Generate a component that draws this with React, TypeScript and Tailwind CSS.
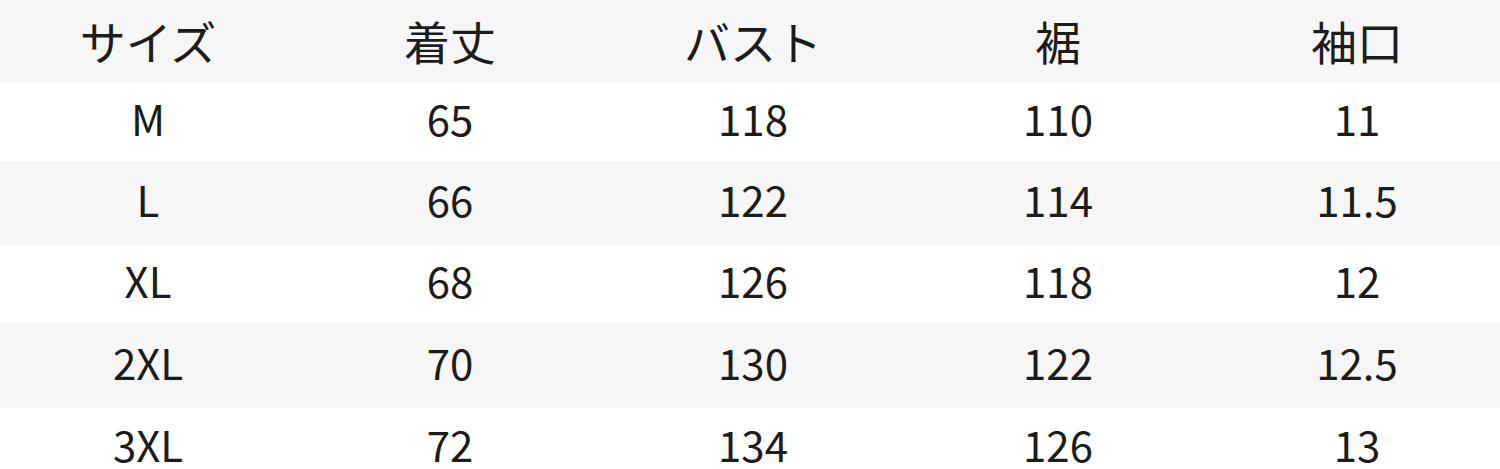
const headers = ['サイズ', '着丈', 'バスト', '裾', '袖口'];

const rows = [
  ['M', '65', '118', '110', '11'],
  ['L', '66', '122', '114', '11.5'],
  ['XL', '68', '126', '118', '12'],
  ['2XL', '70', '130', '122', '12.5'],
  ['3XL', '72', '134', '126', '13'],
];

// last row is cropped by the picture edge
const rowHeights = ['h-[78px] pb-2', 'h-[84px] pb-2', 'h-[78px] pb-2', 'h-[85px] pb-2', 'h-[61px] pt-[10px]'];

const cols = 'grid grid-cols-[296px_308px_298px_312px_286px] items-center';

export default function App() {
  return (
    <div
      className="w-[1500px] h-[469px] overflow-hidden bg-white text-[#1c1c1c]"
      style={{ fontFamily: '"Noto Sans CJK JP", "Noto Sans", sans-serif' }}
    >
      <div className={`${cols} h-[83px] pb-1 bg-[#f6f6f6] text-[46px] leading-none`}>
        {headers.map((h) => (
          <div key={h} className="text-center">
            {h}
          </div>
        ))}
      </div>
      {rows.map((row, i) => (
        <div
          key={row[0]}
          className={`${cols} ${rowHeights[i]} ${i % 2 === 1 ? 'bg-[#f6f6f6]' : 'bg-white'} text-[42px] leading-none`}
        >
          {row.map((cell, j) => (
            <div key={j} className="text-center">
              {cell}
            </div>
          ))}
        </div>
      ))}
    </div>
  );
}
